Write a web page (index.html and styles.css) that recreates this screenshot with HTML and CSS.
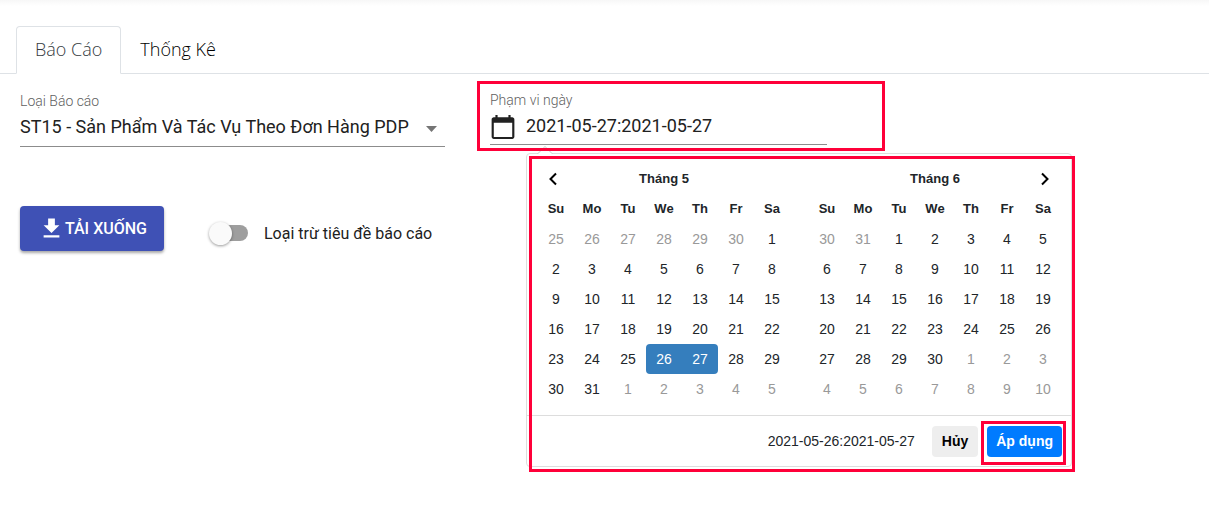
FILE: index.html
```html
<!DOCTYPE html>
<html lang="vi">
<head>
<meta charset="utf-8">
<meta name="viewport" content="width=device-width, initial-scale=1">
<title>Báo Cáo</title>
<link rel="stylesheet" href="styles.css">
</head>
<body>
<nav class="tabs">
  <a class="tab tab-active" href="#report">Báo Cáo</a>
  <a class="tab" href="#stats">Thống Kê</a>
</nav>
<main class="report" id="report">
  <div class="fields">
    <div class="field">
      <label class="field-label" for="type">Loại Báo cáo</label>
      <div class="select-wrap">
        <select class="select" id="type">
          <option>ST15 - Sản Phẩm Và Tác Vụ Theo Đơn Hàng PDP</option>
        </select>
        <svg class="caret" width="11" height="6" viewBox="0 0 11 6"><path d="M0 0h11L5.500 6z" fill="#757575"/></svg>
      </div>
    </div>
    <div class="field date-field">
      <label class="field-label" for="range">Phạm vi ngày</label>
      <div class="date-wrap">
        <svg class="date-icon" width="26" height="26" viewBox="0 0 24 24"><path d="M20.500 3H19V1h-2v2H7V1H5v2H3.500C2.400 3 1.500 3.900 1.500 5v16c0 1.100.9 2 2 2h17c1.100 0 2-.9 2-2V5c0-1.100-.9-2-2-2zm0 18.200h-17V8h17v13.200z" fill="#212121"/></svg>
        <input class="date-input" id="range" type="text" value="2021-05-27:2021-05-27">
      </div>
      <div class="highlight"></div>

      <div class="picker" role="dialog" aria-label="Phạm vi ngày">
        <div class="months">
          <table class="month">
            <thead>
              <tr><th><button class="arrow" type="button" aria-label="Tháng trước"><svg width="10" height="14" viewBox="0 0 10 14"><path d="M8 1.500 2.500 7 8 12.500" fill="none" stroke="#000" stroke-width="2"/></svg></button></th><th colspan="5">Tháng 5</th><th></th></tr>
              <tr><th>Su</th><th>Mo</th><th>Tu</th><th>We</th><th>Th</th><th>Fr</th><th>Sa</th></tr>
            </thead>
            <tbody>
              <tr><td class="off">25</td><td class="off">26</td><td class="off">27</td><td class="off">28</td><td class="off">29</td><td class="off">30</td><td>1</td></tr>
              <tr><td>2</td><td>3</td><td>4</td><td>5</td><td>6</td><td>7</td><td>8</td></tr>
              <tr><td>9</td><td>10</td><td>11</td><td>12</td><td>13</td><td>14</td><td>15</td></tr>
              <tr><td>16</td><td>17</td><td>18</td><td>19</td><td>20</td><td>21</td><td>22</td></tr>
              <tr><td>23</td><td>24</td><td>25</td><td class="active start">26</td><td class="active end">27</td><td>28</td><td>29</td></tr>
              <tr><td>30</td><td>31</td><td class="off">1</td><td class="off">2</td><td class="off">3</td><td class="off">4</td><td class="off">5</td></tr>
            </tbody>
          </table>
          <table class="month">
            <thead>
              <tr><th></th><th colspan="5">Tháng 6</th><th><button class="arrow" type="button" aria-label="Tháng sau"><svg width="10" height="14" viewBox="0 0 10 14"><path d="M2 1.500 7.500 7 2 12.500" fill="none" stroke="#000" stroke-width="2"/></svg></button></th></tr>
              <tr><th>Su</th><th>Mo</th><th>Tu</th><th>We</th><th>Th</th><th>Fr</th><th>Sa</th></tr>
            </thead>
            <tbody>
              <tr><td class="off">30</td><td class="off">31</td><td>1</td><td>2</td><td>3</td><td>4</td><td>5</td></tr>
              <tr><td>6</td><td>7</td><td>8</td><td>9</td><td>10</td><td>11</td><td>12</td></tr>
              <tr><td>13</td><td>14</td><td>15</td><td>16</td><td>17</td><td>18</td><td>19</td></tr>
              <tr><td>20</td><td>21</td><td>22</td><td>23</td><td>24</td><td>25</td><td>26</td></tr>
              <tr><td>27</td><td>28</td><td>29</td><td>30</td><td class="off">1</td><td class="off">2</td><td class="off">3</td></tr>
              <tr><td class="off">4</td><td class="off">5</td><td class="off">6</td><td class="off">7</td><td class="off">8</td><td class="off">9</td><td class="off">10</td></tr>
            </tbody>
          </table>
        </div>
        <div class="picker-footer">
          <span class="selected-range">2021-05-26:2021-05-27</span>
          <button class="btn btn-cancel" type="button">Hủy</button>
          <div class="apply-wrap">
            <button class="btn btn-apply" type="button">Áp dụng</button>
            <div class="highlight highlight-apply"></div>
          </div>
        </div>
        <div class="highlight highlight-picker"></div>
      </div>
    </div>
  </div>
  <div class="actions">
    <button class="download" type="button">
      <svg width="27" height="27" viewBox="0 0 24 24"><path d="M19 9h-4V3H9v6H5l7 7 7-7zM5 18v2h14v-2H5z" fill="#fff"/></svg>TẢI XUỐNG
    </button>
    <label class="toggle"><input class="switch" type="checkbox" role="switch">Loại trừ tiêu đề báo cáo</label>
  </div>
</main>
</body>
</html>
```
FILE: styles.css
```css
* { box-sizing: border-box; }
body {
  min-height: 100vh;
  margin: 0;
  background: linear-gradient(#f7f7f7, #fff 6px) no-repeat #fff;
  color: #212121;
  font-family: Roboto, sans-serif;
}
button, input, select { font: inherit; color: inherit; }
svg { display: block; flex: none; }

.tabs {
  display: flex;
  padding: 26px 16px 0;
  border-bottom: 1px solid #dee2e6;
}
.tab {
  height: 48px;
  margin-bottom: -1px;
  padding: 0 18px;
  border: 1px solid transparent;
  border-radius: 4px 4px 0 0;
  color: #000;
  font: 300 18px/45px "Open Sans", sans-serif;
  text-decoration: none;
}
.tab-active {
  border-color: #dee2e6 #dee2e6 #fff;
  background: #fff;
  color: #343a40;
}

.report { padding: 7px 20px 20px; }
.fields {
  display: grid;
  grid-template-columns: minmax(0, 425px) minmax(0, 408px);
  gap: 32px;
  align-items: start;
}
.field { padding-top: 12px; }
.field-label {
  display: block;
  color: #5f5f5f;
  font-size: 14px;
  font-weight: 300;
  line-height: 16px;
}
.select-wrap {
  display: flex;
  align-items: center;
  border-bottom: 1px solid #8c8c8c;
}
.select {
  flex: 1;
  min-width: 0;
  height: 37px;
  margin-right: -24px;
  padding: 0 24px 2px 0;
  border: 0;
  background: none;
  appearance: none;
  font-size: 18px;
}
.caret { margin: 2px 8px 0 0; pointer-events: none; }

.date-field {
  position: relative;
  padding: 11px 58px 6px 13px;
}
.date-wrap {
  display: flex;
  align-items: center;
  gap: 10px;
  border-bottom: 1px solid #8c8c8c;
}
.date-icon { margin-top: 2px; }
.date-input {
  flex: 1;
  min-width: 0;
  height: 36px;
  padding: 0 0 1px;
  border: 0;
  background: none;
  font-size: 18px;
  outline: 0;
}

.highlight {
  position: absolute;
  inset: 0;
  z-index: 2;
  border: 3px solid #ff0039;
  pointer-events: none;
}
.highlight-picker { inset: 2px -4px -6px 2px; }
.highlight-apply { inset: -5px -4px -8px -6px; }

.picker {
  position: absolute;
  top: 72px;
  left: 49px;
  z-index: 1;
  border: 1px solid #ddd;
  border-radius: 4px;
  background: #fff;
  color: #212529;
  font: 14px/20px "Liberation Sans", Arial, sans-serif;
}
.picker::before, .picker::after {
  content: "";
  position: absolute;
  border: solid transparent;
}
.picker::before {
  top: -8px;
  left: 10px;
  border-width: 0 8px 8px;
  border-bottom-color: #ccc;
}
.picker::after {
  top: -7px;
  left: 11px;
  border-width: 0 7px 7px;
  border-bottom-color: #fff;
}
.months {
  display: flex;
  gap: 19px;
  padding: 10px 10px 11px 11px;
}
.month {
  width: 252px;
  border-collapse: collapse;
  table-layout: fixed;
  text-align: center;
}
.month th, .month td { height: 30px; padding: 0; }
.month th { font-size: 13px; }
.off { color: #999; }
.active { background: #357ebd; color: #fff; }
.start { border-radius: 4px 0 0 4px; }
.end { border-radius: 0 4px 4px 0; }
.arrow {
  display: inline-flex;
  padding: 4px 6px 4px 0;
  border: 0;
  background: none;
  vertical-align: middle;
}
.month th:last-child .arrow { padding: 4px 0 4px 4px; }
.picker-footer {
  display: flex;
  align-items: flex-start;
  justify-content: flex-end;
  padding: 10px 9px 9px;
  border-top: 1px solid #ddd;
}
.selected-range { margin-right: 17px; line-height: 31px; }
.btn {
  display: block;
  height: 31px;
  padding: 0 10px 2px;
  border: 0;
  border-radius: 4px;
  font-weight: 700;
}
.btn-cancel { background: #eee; color: #000; }
.btn-apply { padding: 0 9px 2px; background: #007bff; color: #fff; }
.apply-wrap { position: relative; margin-left: 9px; }

.actions {
  display: flex;
  align-items: center;
  gap: 45px;
  padding-top: 55px;
}
.download {
  display: flex;
  align-items: center;
  height: 45px;
  padding: 0 17px 0 18px;
  border: 0;
  border-radius: 4px;
  background: #3f51b5;
  color: #fff;
  font-size: 16px;
  font-weight: 500;
  box-shadow: 0 2px 3px rgb(0 0 0 / 35%);
}
.toggle {
  display: flex;
  align-items: center;
  gap: 16px;
  padding-top: 9px;
  font-size: 16px;
}
.switch {
  position: relative;
  width: 36px;
  height: 16px;
  margin: 0 0 0 3px;
  border-radius: 8px;
  background: #9e9e9e;
  appearance: none;
}
.switch::before {
  content: "";
  position: absolute;
  top: -3px;
  left: -3px;
  width: 23px;
  height: 23px;
  border-radius: 50%;
  background: #fafafa;
  box-shadow: 0 1px 3px rgb(0 0 0 / 40%);
}
```
